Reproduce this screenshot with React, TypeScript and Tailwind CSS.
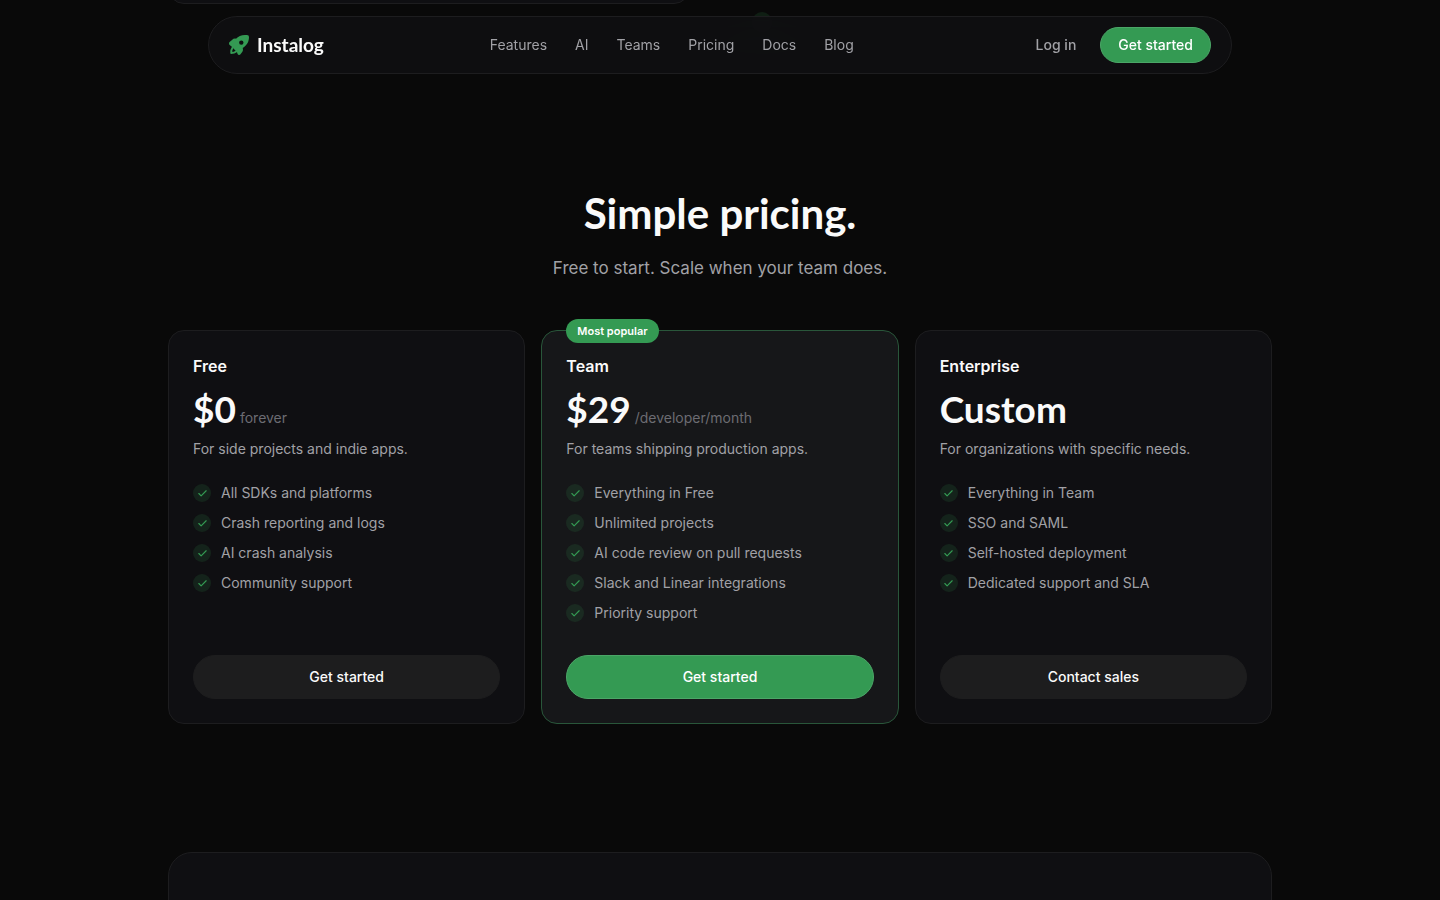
import { Check } from "lucide-react";

type Plan = {
  name: string;
  price: string;
  unit?: string;
  blurb: string;
  features: string[];
  cta: string;
  popular?: boolean;
};

const links = ["Features", "AI", "Teams", "Pricing", "Docs", "Blog"];

const plans: Plan[] = [
  {
    name: "Free",
    price: "$0",
    unit: "forever",
    blurb: "For side projects and indie apps.",
    features: ["All SDKs and platforms", "Crash reporting and logs", "AI crash analysis", "Community support"],
    cta: "Get started",
  },
  {
    name: "Team",
    price: "$29",
    unit: "/developer/month",
    blurb: "For teams shipping production apps.",
    features: [
      "Everything in Free",
      "Unlimited projects",
      "AI code review on pull requests",
      "Slack and Linear integrations",
      "Priority support",
    ],
    cta: "Get started",
    popular: true,
  },
  {
    name: "Enterprise",
    price: "Custom",
    blurb: "For organizations with specific needs.",
    features: ["Everything in Team", "SSO and SAML", "Self-hosted deployment", "Dedicated support and SLA"],
    cta: "Contact sales",
  },
];

function RocketLogo() {
  return (
    <svg viewBox="0 0 20 20" className="size-5 text-[#349a53]" fill="currentColor" aria-hidden="true">
      <path
        fillRule="evenodd"
        d="M18 0C13.200-.2 9.600.900 7 3.700 5.500 3.300 4.200 3.800 3 4.900L.6 7.100C-.2 7.900-.2 9 .4 9.700L2.800 11.800 8 17.200 8.600 18.900C9 20 10.600 20.300 11.500 19.300L13.200 17C14 15.900 14.200 14.500 13.700 13.100 18 10.300 20 6.800 20 2A2 2 0 0 0 18 0ZM12.300 5.400a2.200 2.200 0 1 1 0 4.400 2.200 2.200 0 0 1 0-4.400Z"
      />
      <path
        d="M3.400 12.800c-1 1.300-1.300 3-1.200 5.200 2 0 3.700-.4 5-1.400"
        fill="none"
        stroke="currentColor"
        strokeWidth="1.900"
        strokeLinecap="round"
        strokeLinejoin="round"
      />
    </svg>
  );
}

function Header() {
  return (
    <header className="fixed inset-x-0 top-4 z-10 px-4">
      <div className="mx-auto flex h-[58px] max-w-5xl items-center justify-between rounded-full border border-[#1d1d1f] bg-[#0f0f12]/90 px-5 backdrop-blur-xl">
        <a href="#home" className="flex items-center gap-2 font-['Lato',sans-serif] text-[19px] font-bold text-[#fafafa]">
          <RocketLogo />
          Instalog
        </a>
        <nav aria-label="Main" className="flex items-center gap-7 text-sm text-[#a1a1a6]">
          {links.map((link) => (
            <a key={link} href={`#${link.toLowerCase()}`}>
              {link}
            </a>
          ))}
        </nav>
        <div className="flex items-center gap-2 text-sm font-medium">
          <a href="#login" className="px-4 text-[#a1a1a6]">
            Log in
          </a>
          <button type="button" className="h-9 rounded-full border border-[#4ba667] bg-[#349a53] px-[17px] text-white">
            Get started
          </button>
        </div>
      </div>
    </header>
  );
}

function PlanCard({ plan }: { plan: Plan }) {
  return (
    <article
      className={`relative flex flex-col rounded-2xl border p-6 ${
        plan.popular ? "border-[#29563a] bg-[#161719]" : "border-[#1d1d1f] bg-[#0f0f12]"
      }`}
    >
      {plan.popular && (
        <span className="absolute -top-3 left-6 flex h-6 items-center rounded-full bg-[#349a53] px-[11px] text-[11px] font-semibold text-white">
          Most popular
        </span>
      )}
      <h3 className="text-base leading-[22px] font-semibold text-[#fafafa]">{plan.name}</h3>
      <p className="mt-2 flex h-12 items-baseline gap-1">
        <span className="font-['Lato',sans-serif] text-[37px] leading-12 font-bold text-[#fafafa]">
          {plan.price}
        </span>
        {plan.unit && <span className="text-sm text-[#6c6c72]">{plan.unit}</span>}
      </p>
      <p className="mt-1 text-sm leading-6 text-[#a1a1a6]">{plan.blurb}</p>
      <ul className="mt-[22px] mb-8 flex grow flex-col gap-2.5">
        {plan.features.map((feature) => (
          <li key={feature} className="flex items-center gap-2.5 text-sm leading-5 text-[#a1a1a6]">
            <span className="flex size-[18px] items-center justify-center rounded-full bg-[#349a53]/15">
              <Check size={11} strokeWidth={2.5} className="text-[#349a53]" aria-hidden="true" />
            </span>
            {feature}
          </li>
        ))}
      </ul>
      <button
        type="button"
        className={`h-11 rounded-full border text-sm font-medium ${
          plan.popular ? "border-[#4ba667] bg-[#349a53] text-white" : "border-[#1d1d1e] bg-[#1d1d1e] text-[#fafafa]"
        }`}
      >
        {plan.cta}
      </button>
    </article>
  );
}

export default function App() {
  return (
    <div className="h-screen overflow-hidden bg-[#090909] font-['Inter',sans-serif] antialiased">
      <Header />
      <main className="mx-auto max-w-6xl px-6">
        <section aria-label="Overview" className="relative flex h-1 items-end">
          <div className="h-10 w-[522px] rounded-2xl border border-[#1d1d1f] bg-[#0f0f12]" />
          <span className="absolute top-3 left-146 size-5 rounded-full bg-[#349a53]/15" />
        </section>

        <section id="pricing" className="pt-46">
          <div className="text-center">
            <h2 className="font-['Lato',sans-serif] text-[42px] leading-[50px] font-bold text-[#fafafa]">
              Simple pricing.
            </h2>
            <p className="mt-4 text-[17px] leading-7 text-[#a1a1a6]">Free to start. Scale when your team does.</p>
          </div>
          <div className="mt-12 grid grid-cols-3 gap-4">
            {plans.map((plan) => (
              <PlanCard key={plan.name} plan={plan} />
            ))}
          </div>
        </section>

        <section aria-label="Join" className="mt-32 h-80 rounded-3xl border border-[#1d1d1f] bg-[#0f0f12]" />
      </main>
    </div>
  );
}
